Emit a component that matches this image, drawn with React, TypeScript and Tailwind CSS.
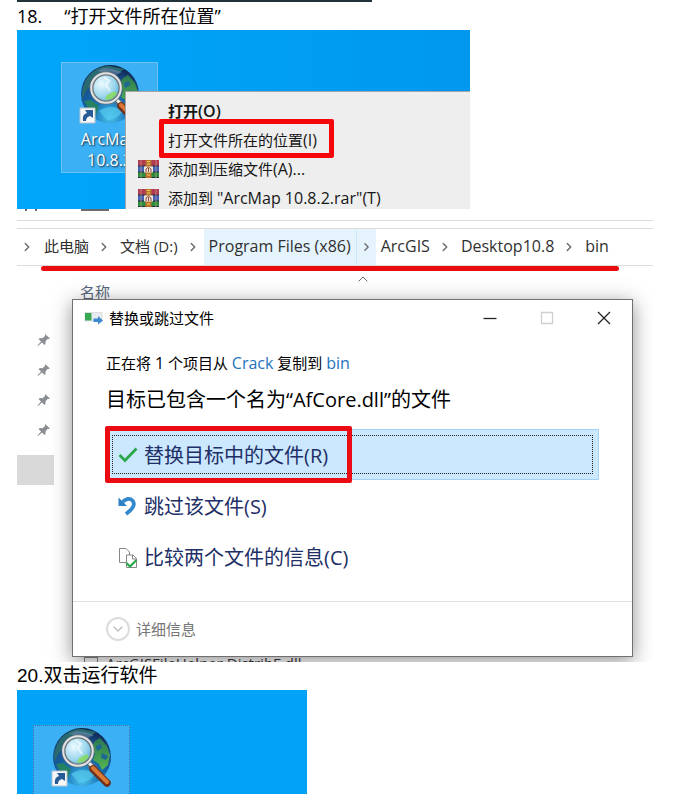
import { ChevronDown, ChevronRight, ChevronUp } from "lucide-react";
import { ReactNode } from "react";
import { twMerge } from "tailwind-merge";

const breadcrumbs = [
    { title: "此电脑", isActive: false },
    { title: "文档 (D:)", isActive: false },
    { title: "Program Files (x86)", isActive: true },
    { title: "ArcGIS", isActive: false },
    { title: "Desktop10.8", isActive: false },
    { title: "bin", isActive: false },
]

export default function App() {
    return (
        <main className="min-h-screen overflow-hidden bg-white pl-[17px] pr-10 font-['Open_Sans','Noto_Sans_CJK_SC',sans-serif] text-black">
            <div className="h-0.5 w-full max-w-[355px] bg-[#22323a]"></div>
            <h2 className="flex h-7 items-center gap-[22px] text-[18px] leading-7">
                <span>18.</span>
                <span>“打开文件所在位置”</span>
            </h2>
            <DesktopWithMenu />
            <Explorer />
            <h2 className="flex h-7 items-center font-['Liberation_Sans','Noto_Sans_CJK_SC',sans-serif] text-[19px] leading-7">20.双击运行软件</h2>
            <section className="h-[104px] w-full max-w-[290px] overflow-hidden bg-[#00a3f7] pl-4 pt-[35px]">
                <DesktopIcon className="border-dotted border-[#37749f]" />
            </section>
        </main>
    )
}

function DesktopWithMenu() {
    return (
        <section className="relative w-full max-w-[453px] overflow-hidden bg-[#00a3f7] bg-linear-to-r from-[#00a6fa] to-[#0098ee] pb-9 pl-11 pt-8">
            <DesktopIcon title="ArcMap 10.8.2" className="border-[#6cc3f7]" />
            <ul role="menu" className="absolute bottom-0 left-[108px] right-0 top-[61px] border-l border-t border-[#a5a5a5] bg-[#eeeeee] pt-1 text-[15px] text-[#161616]">
                <MenuItem className="font-semibold">打开<span className="text-base">(O)</span></MenuItem>
                <MenuItem>
                    打开文件所在的位置<span className="text-base">(I)</span>
                    <span className="absolute left-[33px] top-[-6px] h-[39px] w-[175px] rounded-xs border-[5px] border-[#f4060a]"></span>
                </MenuItem>
                <MenuItem icon={<ArchiveIcon />}>添加到压缩文件<span className="text-base">(A)...</span></MenuItem>
                <MenuItem icon={<ArchiveIcon />}>添加到 <span className="text-base">"ArcMap 10.8.2.rar"(T)</span></MenuItem>
            </ul>
        </section>
    )
}

function DesktopIcon({ title, className }: { title?: string, className?: string }) {
    return (
        <button aria-label="ArcMap" className={twMerge("flex h-[111px] w-[97px] flex-col items-center border bg-[#3cb0f4] text-center text-base leading-[21px] text-white [text-shadow:1px_1px_2px_#123]", className)}>
            <GlobeIcon />
            {title && <span className="mt-1 w-16">{title}</span>}
        </button>
    )
}

type MenuItemProps = {
    children: ReactNode
    icon?: ReactNode
    className?: string
}

function MenuItem({ children, icon, className }: MenuItemProps) {
    return (
        <li role="none">
            <button role="menuitem" className={twMerge("relative flex h-[29px] w-full items-center gap-[9px] whitespace-nowrap pl-3", className)}>
                <span className="h-5 w-[21px]">{icon}</span>
                <span>{children}</span>
            </button>
        </li>
    )
}

function Explorer() {
    return (
        <section className="w-full max-w-[636px] overflow-hidden">
            <div className="flex h-3 items-start gap-11 border-b border-[#dcdcdc] pl-2">
                <i className="h-0.5 w-3 border-x-2 border-[#6a6a6a]"></i>
                <i className="h-0.5 w-7 border-b border-t border-[#6a6a6a]"></i>
            </div>
            <div className="mt-[7px] border-y border-[#dcdcdc]">
                <nav className="flex h-9 items-center overflow-hidden text-[15px] text-[#303030]">
                    <span className="w-[22px]"><Separator /></span>
                    {breadcrumbs.map((crumb, i) => (
                        <div key={crumb.title} className={twMerge("flex h-full items-center whitespace-nowrap", crumb.isActive && "bg-[#e5f3fd]")}>
                            <a href="#" className={twMerge("px-[5px] pb-0.5", i > 1 && "text-base")}>{crumb.title}</a>
                            {i < breadcrumbs.length - 1 && (
                                <span className={twMerge("flex h-full w-[21px] items-center", crumb.isActive && "w-5 border-l border-[#cde8f8]")}><Separator /></span>
                            )}
                        </div>
                    ))}
                </nav>
            </div>
            <div className="ml-6 mr-[34px] h-[5px] rounded-full bg-[#e80c10]"></div>
            <div className="flex">
                <Sidebar />
                <div className="min-w-0 flex-1">
                    <div className="relative flex h-7 justify-center">
                        <span className="absolute left-2 top-[11px] text-[15px] leading-5 text-[#56657d]">名称</span>
                        <ChevronUp className="ml-5 h-4 w-4 text-[#666]" strokeWidth={1.5} />
                    </div>
                    <ReplaceDialog />
                    <div className="flex h-[5px] items-start gap-2 overflow-hidden pl-3">
                        <span className="h-[5px] w-3.5 border-x border-t border-[#808080]"></span>
                        <span className="text-[15px] leading-3 text-[#303030]">ArcGISFileHelper.DistribF.dll</span>
                    </div>
                </div>
                <div className="w-5"></div>
            </div>
        </section>
    )
}

function Separator() {
    return <ChevronRight className="mx-[3px] h-3.5 w-3.5 text-[#6c6c6c]" strokeWidth={2.5} />
}

function Sidebar() {
    return (
        <aside className="w-[55px] pt-[54px]">
            <div className="w-[37px]">
                {[0, 1, 2, 3].map(pin => (
                    <div key={pin} className="flex h-[30px] items-center justify-end pr-[3px]">
                        <svg viewBox="0 0 14 14" className="h-3.5 w-3.5" fill="#8b8f93">
                            <path d="M8 1 13 5.5 11.5 6 10.5 6 8.5 8.5 8.5 11 7.5 12 5 9.5 1 13 .5 12.5 4 8.5 1.5 6 3 5 5.5 5.2 8 3Z" />
                        </svg>
                    </div>
                ))}
                <div className="mt-2.5 h-[30px] bg-[#d9d9d9]"></div>
            </div>
        </aside>
    )
}

function ReplaceDialog() {
    return (
        <div role="dialog" aria-labelledby="dialog-title" className="relative border border-[#707070] bg-white shadow-[0_4px_18px_rgba(40,35,40,0.5)]">
            <header className="flex h-9 items-center">
                <svg viewBox="0 0 20 14" className="ml-[11px] h-3.5 w-5">
                    <path d="M1 1.5H18V10H1Z" fill="#e9ecee" stroke="#c9cdd0" strokeWidth=".6" />
                    <path d="M1 2H7.500V9.500H1Z" fill="#36a852" />
                    <path d="M9.500 7.500H14V5L19 9.500 14 13.500V11H9.500Z" fill="#3d88cf" />
                </svg>
                <h3 id="dialog-title" className="ml-[5px] flex-1 text-[15px]">替换或跳过文件</h3>
                <WindowButton label="最小化"><path d="M.5 7.500H13.500" /></WindowButton>
                <WindowButton label="最大化" className="text-[#cfcfcf]"><path d="M1.500 1.500H12.500V12.500H1.500Z" /></WindowButton>
                <WindowButton label="关闭"><path d="M1 1 13 13M13 1 1 13" /></WindowButton>
            </header>
            <div className="px-[33px]">
                <p className="mt-4 text-[15px] leading-[22px]">
                    正在将 <span className="text-base leading-5">1</span> 个项目从 <a href="#" className="text-base leading-5 text-[#2373bd]">Crack</a> 复制到 <a href="#" className="text-base leading-5 text-[#2373bd]">bin</a>
                </p>
                <p className="mt-3 text-[20px] leading-7">目标已包含一个名为“AfCore.dll”的文件</p>
                <div className="mt-[15px]">
                    <button className="relative flex h-[51px] w-full items-center border border-[#a3d4f5] bg-[#cce8ff] p-[5px] text-[20px] text-[#1d2f66]">
                        <span className="flex h-full w-full items-center gap-1.5 border border-dotted border-[#222] pl-[5px] pt-0.5">
                            <svg viewBox="0 0 20 20" className="h-5 w-5" fill="none" stroke="#2ba84a" strokeWidth="2.800">
                                <path d="M1.500 9 7 14.500 18.500 2.500" />
                            </svg>
                            替换目标中的文件(R)
                        </span>
                        <span className="absolute left-[-2px] top-[-4px] h-[57px] w-[247px] rounded-xs border-[5px] border-[#ea0c12]"></span>
                    </button>
                    <button className="flex h-[51px] w-full items-center gap-1.5 pl-3 pt-0.5 text-[20px] text-[#1d2f66]">
                        <svg viewBox="0 0 20 20" className="h-5 w-5" fill="none">
                            <path d="M.5.5V9H9L6.500 6.500 4 4Z" fill="#2f7fc4" />
                            <path d="M4.500 5C8 1.500 12 1 14.500 3.500 18 7.500 14.500 12 8 17" stroke="#3488cc" strokeWidth="3.800" />
                        </svg>
                        跳过该文件(S)
                    </button>
                    <button className="flex h-[51px] w-full items-center gap-1.5 pl-3 pt-0.5 text-[20px] text-[#1d2f66]">
                        <svg viewBox="0 0 20 20" className="h-5 w-5" fill="#fff" stroke="#868686">
                            <path d="M1.500.5H8L11.500 4V14.500H1.500Z" />
                            <path d="M8.500 7H15L18.500 10.500V19.500H8.500Z" />
                            <path d="M14.500 7V11H18.500" fill="none" />
                            <path d="M8.500 15 12 18.500 18.500 12" fill="none" stroke="#2ba84a" strokeWidth="2.200" />
                        </svg>
                        比较两个文件的信息(C)
                    </button>
                </div>
            </div>
            <footer className="mt-[19px] flex h-[55px] items-center border-t border-[#dfdfdf] px-[33px]">
                <button className="flex items-center gap-1.5 text-[15px] text-[#767676]">
                    <span className="flex h-6 w-6 items-center justify-center rounded-full border-2 border-[#dcdcdc]">
                        <ChevronDown className="h-4 w-4 text-[#bdbdbd]" />
                    </span>
                    详细信息
                </button>
            </footer>
        </div>
    )
}

type WindowButtonProps = {
    label: string
    children: ReactNode
    className?: string
}

function WindowButton({ label, children, className }: WindowButtonProps) {
    return (
        <button aria-label={label} className={twMerge("flex h-full w-[57px] items-center justify-center text-[#222]", className)}>
            <svg viewBox="0 0 14 14" className="h-3.5 w-3.5" fill="none" stroke="currentColor" strokeWidth="1.300">{children}</svg>
        </button>
    )
}

function ArchiveIcon() {
    return (
        <svg viewBox="0 0 21 20" className="h-5 w-[21px]">
            <path d="M0 1H21V7H0Z" fill="#b03a52" />
            <path d="M0 7H21V13H0Z" fill="#4661b4" />
            <path d="M0 13H21V19H0Z" fill="#2f8b3c" />
            <path d="M0 7H21M0 13H21M0 18.500H21" stroke="#26303a" />
            <path d="M3 1V19M18 1V19" stroke="#e6c9a0" strokeOpacity=".5" />
            <path d="M7.500 1H13.500V19H7.500Z" fill="#b9722e" />
            <path d="M6 7.500H15V13.500H6Z" fill="#f1e6dc" />
            <path d="M8 13V10L10.500 8 13 10V13M10.500 9V13" stroke="#8a4a30" fill="none" />
            <path d="M9 2.500H12M9 5H12M9 16H12" stroke="#f0d060" />
        </svg>
    )
}

function GlobeIcon() {
    return (
        <svg viewBox="0 0 62 62" className="h-[62px] w-[62px] shrink-0">
            <defs>
                <radialGradient id="ocean" cx=".5" cy=".9" r=".9">
                    <stop offset="0" stopColor="#4cc4ee" />
                    <stop offset=".35" stopColor="#1670b4" />
                    <stop offset=".75" stopColor="#174a87" />
                    <stop offset="1" stopColor="#0d2146" />
                </radialGradient>
                <radialGradient id="lens" cx=".35" cy=".35" r=".75">
                    <stop offset="0" stopColor="#ecfaff" />
                    <stop offset=".6" stopColor="#9bd6ee" />
                    <stop offset="1" stopColor="#4ba3cf" />
                </radialGradient>
                <linearGradient id="land" x1="0" y1="0" x2="0" y2="1">
                    <stop offset="0" stopColor="#2c7752" />
                    <stop offset="1" stopColor="#55b651" />
                </linearGradient>
            </defs>
            <circle cx="31" cy="31" r="29" fill="url(#ocean)" />
            <path d="M10 12Q20 2 31 3L45 6 40 10 30 8 20 13 8 27 3 36Q2 22 10 12Z" fill="#286a70" />
            <path d="M18 8 25 5 34 6 43 9 37 12 27 10Z" fill="#6c87ac" opacity=".6" />
            <path d="M44 15 49 12 56 20 59 29 57 39 51 44 48 38 42 34 44 28 40 22Z" fill="url(#land)" />
            <path d="M45 20 50 18 51 22 46 25M51 27 57 30 55 34 50 32" fill="#1c6796" />
            <path d="M5 38 12 37 20 43 17 52 12 50Z" fill="#248262" />
            <path d="M20 48Q32 40 44 48 38 57 28 57Z" fill="#56c9ec" opacity=".7" />
            <path d="M38 38 45 44" stroke="#696969" strokeWidth="6" />
            <path d="M38 37 44 43" stroke="#eeeeee" strokeWidth="3" />
            <path d="M42 43 56 57" stroke="#6e301d" strokeWidth="7.500" strokeLinecap="round" />
            <path d="M42 42 56 56" stroke="#d97735" strokeWidth="4" strokeLinecap="round" />
            <circle cx="27" cy="25" r="14.500" fill="url(#lens)" stroke="#6d7479" strokeWidth="4" />
            <circle cx="27" cy="25" r="14.800" fill="none" stroke="#dfe3e5" strokeWidth="2" />
            <path d="M26 37 28 32 36 28 38 31 33 36Z" fill="#8bdd52" opacity=".8" />
            <path d="M25 14 30 18 27 22 31 28" stroke="#fff" strokeWidth="2" fill="none" opacity=".6" />
            <path d="M1 45H16V60H1Z" fill="#f5f7f9" stroke="#b9c4cd" />
            <path d="M4 58Q3 51 8 50L6 47H14V55L11 53Q7 54 7 58Z" fill="#285a95" />
        </svg>
    )
}
